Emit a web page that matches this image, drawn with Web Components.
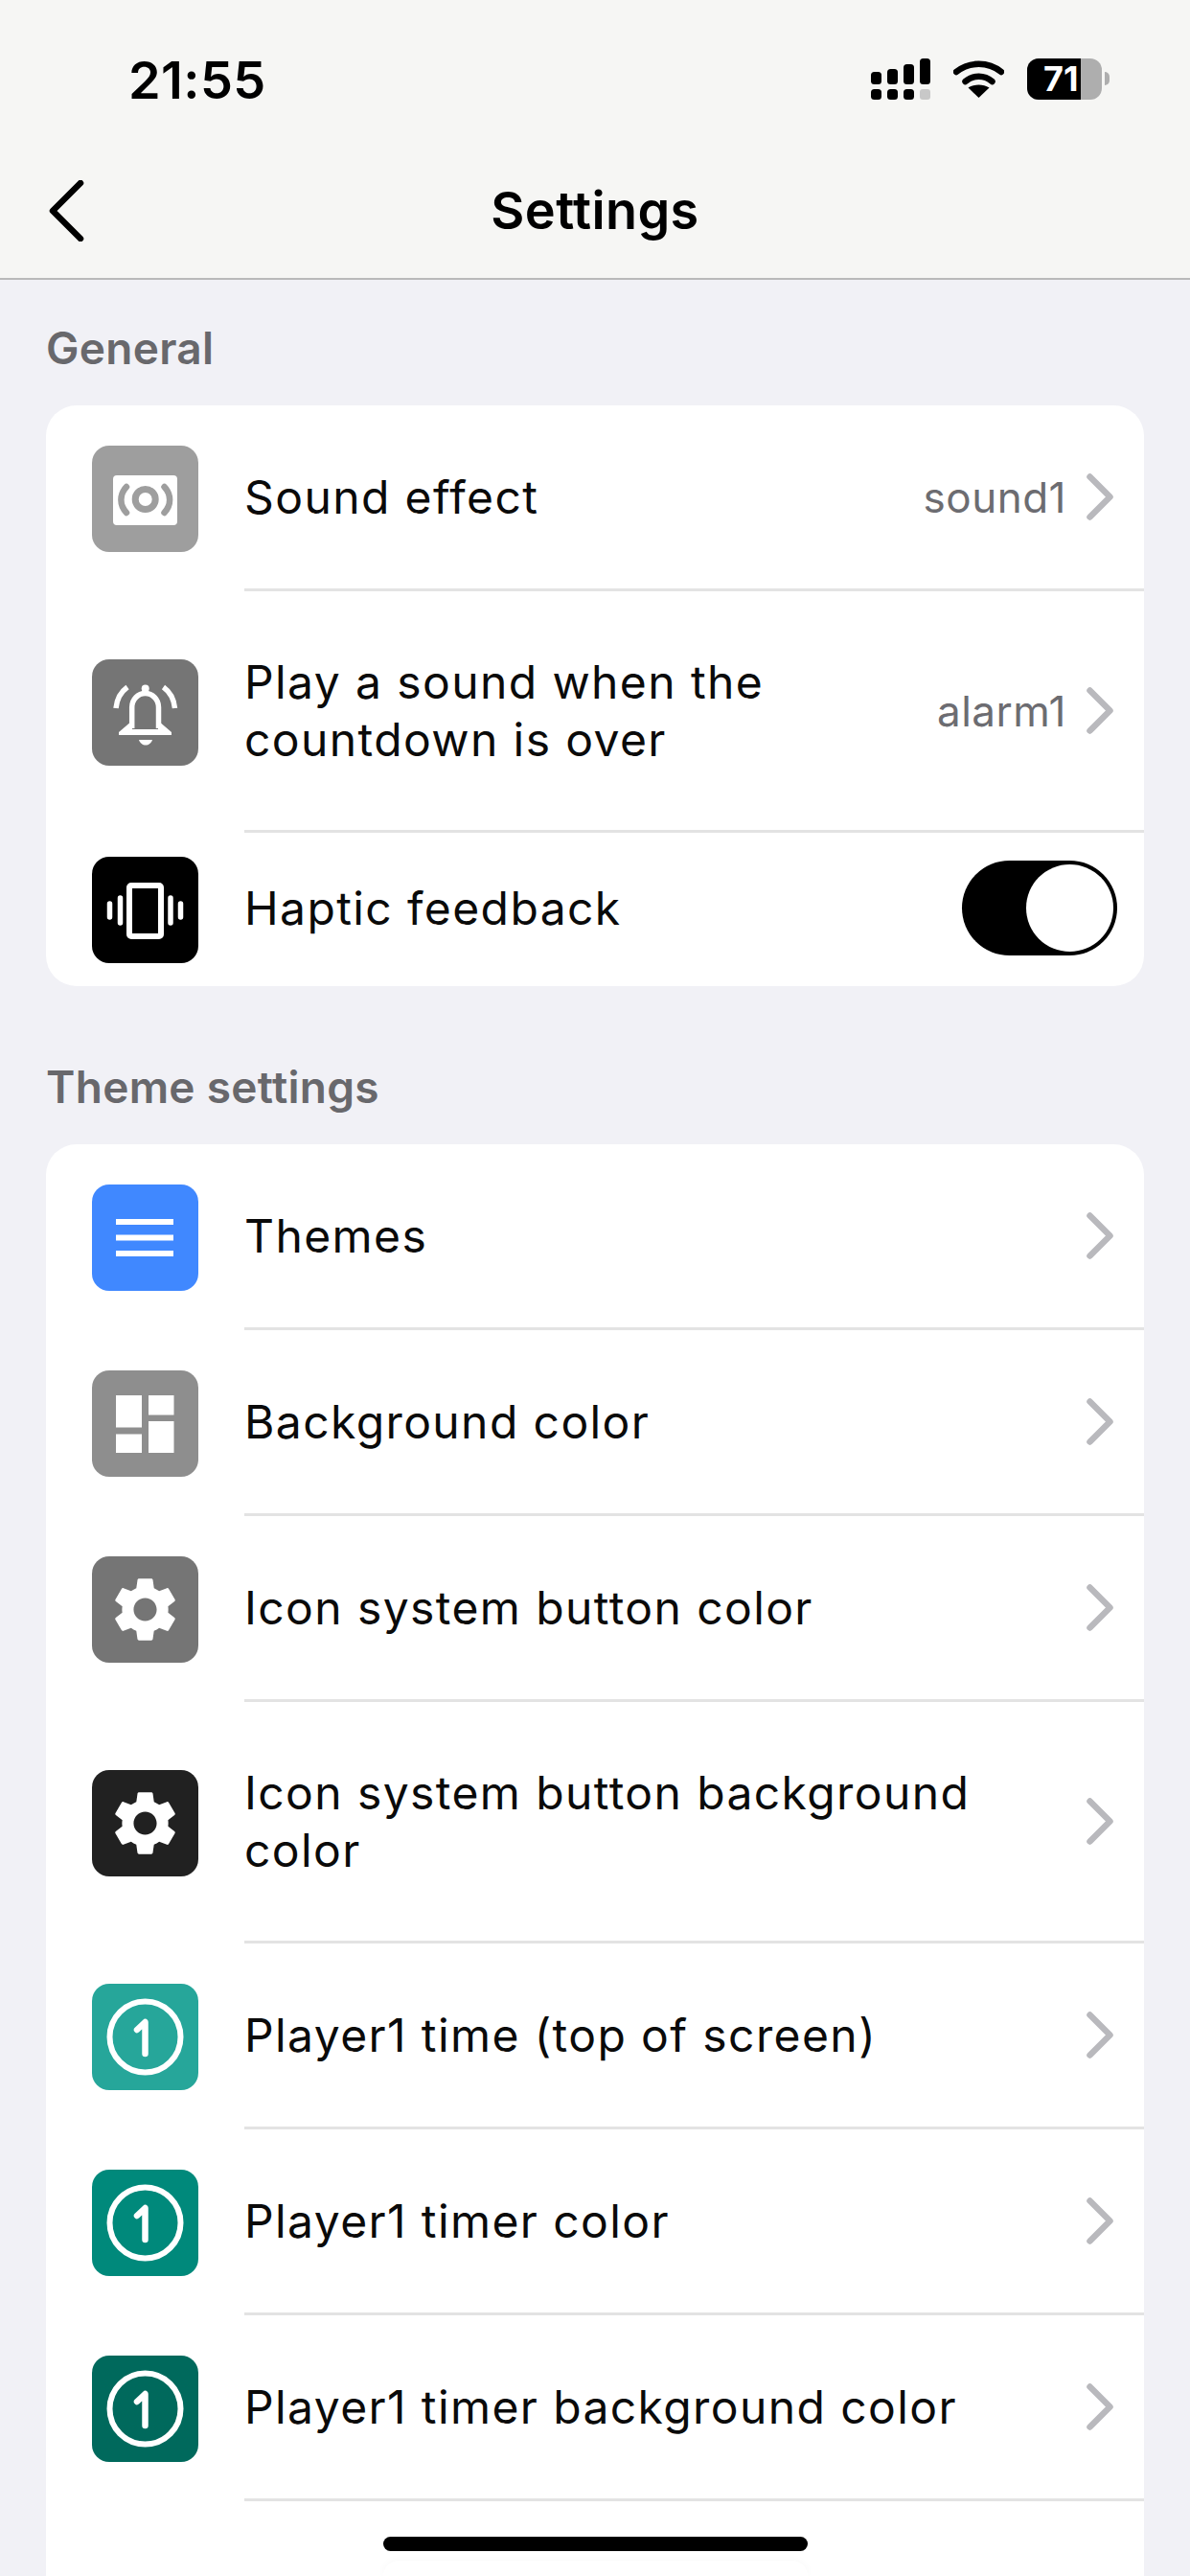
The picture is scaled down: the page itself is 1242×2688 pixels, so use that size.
<!DOCTYPE html>
<html lang="en">
<head>
<meta charset="utf-8">
<title>Settings</title>
<style>
  html, body { margin: 0; height: 100%; overflow: hidden; }
  body {
    display: flex;
    flex-direction: column;
    height: 2688px;
    background: #f1f1f6;
    font-family: Inter, "Liberation Sans", sans-serif;
    color: #000;
    position: relative;
  }
  settings-section:last-of-type { flex: 1; min-height: 0; }
</style>
</head>
<body>
  <app-header title="Settings" time="21:55" battery="71"></app-header>

  <settings-section heading="General">
    <settings-row value="sound1">
      <setting-icon slot="icon" name="sound" bg="#9e9e9e"></setting-icon>
      Sound effect
    </settings-row>
    <settings-row value="alarm1">
      <setting-icon slot="icon" name="bell" bg="#757575"></setting-icon>
      Play a sound when the<br>countdown is over
    </settings-row>
    <settings-row compact last>
      <setting-icon slot="icon" name="vibrate" bg="#000000"></setting-icon>
      Haptic feedback
      <toggle-switch slot="end"></toggle-switch>
    </settings-row>
  </settings-section>

  <settings-section heading="Theme settings" open-end>
    <settings-row>
      <setting-icon slot="icon" name="menu" bg="#4088ff"></setting-icon>
      Themes
    </settings-row>
    <settings-row>
      <setting-icon slot="icon" name="dashboard" bg="#8e8e8e"></setting-icon>
      Background color
    </settings-row>
    <settings-row>
      <setting-icon slot="icon" name="gear" bg="#757575"></setting-icon>
      Icon system button color
    </settings-row>
    <settings-row>
      <setting-icon slot="icon" name="gear" bg="#212121"></setting-icon>
      Icon system button background<br>color
    </settings-row>
    <settings-row>
      <setting-icon slot="icon" name="one" bg="#26a69a"></setting-icon>
      Player1 time (top of screen)
    </settings-row>
    <settings-row>
      <setting-icon slot="icon" name="one" bg="#00897b"></setting-icon>
      Player1 timer color
    </settings-row>
    <settings-row>
      <setting-icon slot="icon" name="one" bg="#00695c"></setting-icon>
      Player1 timer background color
    </settings-row>
  </settings-section>

  <home-indicator></home-indicator>

<script>
// Inline glyphs for the rounded tiles, drawn on a 111 x 111 canvas
const ICONS = {
  sound: `
    <rect x="22" y="31" width="67" height="52" rx="4" fill="#fff"/>
    <circle cx="55.700" cy="56" r="10.500" fill="none" stroke="#9e9e9e" stroke-width="7"/>
    <path d="M36 43C28.500 51 28.500 62 36 70M75.500 43C83 51 83 62 75.500 70" fill="none" stroke="#9e9e9e" stroke-width="6.500" stroke-linecap="round"/>`,
  bell: `
    <g fill="none" stroke="#fff" stroke-width="5.500">
      <path d="M25 51C26 41 30 34 37 29M86.500 51C85.500 41 81.500 34 74.500 29"/>
      <path d="M41.700 72V50C41.700 42 48 35.500 55.600 35.500S69.500 42 69.500 50V72"/>
    </g>
    <circle cx="55.700" cy="30.500" r="4" fill="#fff"/>
    <path d="M42 64L28 76V79H83V76L69 64V73H42z" fill="#fff"/>
    <path d="M49 84H63C62 87.500 59 89.500 56 89.500S50 87.500 49 84z" fill="#fff"/>`,
  vibrate: `
    <rect x="39" y="30" width="33" height="53" rx="2" fill="none" stroke="#fff" stroke-width="6"/>
    <g fill="none" stroke="#fff" stroke-width="5.500" stroke-linecap="round">
      <path d="M29.500 43v26M82 43v26M18.500 49v14M92.500 49v14"/>
    </g>`,
  menu: `
    <g fill="#fff">
      <rect x="25" y="36" width="60" height="6"/>
      <rect x="25" y="52.500" width="60" height="6"/>
      <rect x="25" y="69" width="60" height="6"/>
    </g>`,
  dashboard: `
    <g fill="#fff">
      <rect x="25" y="26" width="27" height="33.500"/>
      <rect x="25" y="66.500" width="27" height="19.500"/>
      <rect x="59" y="26" width="26.500" height="20.500"/>
      <rect x="59" y="53" width="26.500" height="33"/>
    </g>`,
  gear: `
    <g transform="translate(15.300 15.300) scale(3.350)">
      <path fill="#fff" d="M19.140 12.940c.04-.3.06-.61.06-.94 0-.32-.02-.64-.07-.94l2.030-1.580c.18-.14.23-.41.12-.61l-1.920-3.320c-.12-.22-.37-.29-.59-.22l-2.390.96c-.5-.38-1.030-.7-1.620-.94l-.36-2.540c-.04-.24-.24-.41-.48-.41h-3.840c-.24 0-.43.17-.47.41l-.36 2.540c-.59.24-1.130.57-1.620.94l-2.390-.96c-.22-.08-.47 0-.59.22L2.740 8.870c-.12.21-.08.47.12.61l2.030 1.580c-.05.3-.09.63-.09.94s.02.64.07.94l-2.030 1.580c-.18.14-.23.41-.12.61l1.920 3.320c.12.22.37.29.59.22l2.390-.96c.5.38 1.030.7 1.620.94l.36 2.540c.05.24.24.41.48.41h3.840c.24 0 .44-.17.47-.41l.36-2.540c.59-.24 1.130-.56 1.620-.94l2.390.96c.22.08.47 0 .59-.22l1.920-3.320c.12-.22.07-.47-.12-.61l-2.010-1.580zM12 15.600c-1.980 0-3.600-1.620-3.600-3.600s1.620-3.600 3.600-3.600 3.600 1.620 3.600 3.600-1.620 3.600-3.600 3.600z"/>
    </g>`,
  one: `
    <circle cx="55.500" cy="55.500" r="37" fill="none" stroke="#fff" stroke-width="6"/>
    <path d="M47 48l8.500-8v33" fill="none" stroke="#fff" stroke-width="6.500" stroke-linecap="round" stroke-linejoin="round"/>`
};

class SettingIcon extends HTMLElement {
  constructor() {
    super();
    this.attachShadow({ mode: 'open' });
  }

  connectedCallback() {
    const name = this.getAttribute('name');
    const bg = this.getAttribute('bg') || '#757575';
    this.shadowRoot.innerHTML = `
      <style>
        :host { display: block; width: 111px; height: 111px; flex: none; }
        .tile { width: 111px; height: 111px; border-radius: 18px; background: ${bg}; overflow: hidden; }
        svg { display: block; }
      </style>
      <div class="tile">
        <svg width="111" height="111" viewBox="0 0 111 111" aria-hidden="true">${ICONS[name] || ''}</svg>
      </div>
    `;
  }
}

class ToggleSwitch extends HTMLElement {
  constructor() {
    super();
    const shadow = this.attachShadow({ mode: 'open' });
    shadow.innerHTML = `
      <style>
        :host { display: block; flex: none; }
        .track {
          box-sizing: border-box;
          width: 162px;
          height: 99px;
          padding: 4px;
          border-radius: 50px;
          background: #000;
          display: flex;
          justify-content: flex-end;
        }
        .knob { width: 91px; height: 91px; border-radius: 50%; background: #fff; }
      </style>
      <div class="track"><div class="knob"></div></div>
    `;
  }
}

class SettingsRow extends HTMLElement {
  constructor() {
    super();
    const shadow = this.attachShadow({ mode: 'open' });
    shadow.innerHTML = `
      <style>
        :host {
          display: flex;
          align-items: center;
          gap: 48px;
          padding-left: 48px;
          font-size: 48px;
          line-height: 60px;
          letter-spacing: 1.4px;
          color: #0a0a0a;
        }
        .body {
          flex: 1;
          min-width: 0;
          box-sizing: border-box;
          min-height: 194px;
          padding: 64.500px 32px 64.500px 0;
          border-bottom: 3px solid #e3e3e3;
          display: flex;
          align-items: center;
        }
        :host([compact]) .body { min-height: 160px; padding: 0 28px 3px 0; }
        :host([last]) .body { border-bottom: none; }
        .label { flex: 1; min-width: 0; }
        .value { font-size: 44px; letter-spacing: 0.5px; color: #6c6c71; margin-right: 21px; }
        .chevron { display: block; flex: none; }
        .value:empty { display: none; }
      </style>
      <slot name="icon"></slot>
      <div class="body">
        <div class="label"><slot></slot></div>
        <span class="value"></span>
        <slot name="end">
          <svg class="chevron" width="28" height="49" viewBox="0 0 28 49" aria-hidden="true">
            <path d="M3.500 3.500L24.500 24.500L3.500 45.500" fill="none" stroke="#b9b9bd" stroke-width="6.500" stroke-linecap="round" stroke-linejoin="round"/>
          </svg>
        </slot>
      </div>
    `;
    this._value = shadow.querySelector('.value');
  }

  static get observedAttributes() {
    return ['value'];
  }

  attributeChangedCallback(name, oldValue, newValue) {
    if (name === 'value') this._value.textContent = newValue || '';
  }
}

class SettingsSection extends HTMLElement {
  constructor() {
    super();
    const shadow = this.attachShadow({ mode: 'open' });
    shadow.innerHTML = `
      <style>
        :host { display: flex; flex-direction: column; padding: 0 48px; margin-top: 75px; }
        :host(:first-of-type) { margin-top: 0; }
        h2 {
          margin: 0 0 30px;
          font-size: 46px;
          line-height: 60px;
          letter-spacing: 0.3px;
          font-weight: 600;
          color: #68686c;
        }
        .card { flex: 1; background: #fff; border-radius: 32px; overflow: hidden; }
        /* the list runs on past the bottom of the screen */
        :host([open-end]) .card { border-radius: 32px 32px 0 0; }
      </style>
      <h2></h2>
      <div class="card"><slot></slot></div>
    `;
    this._heading = shadow.querySelector('h2');
  }

  static get observedAttributes() {
    return ['heading'];
  }

  attributeChangedCallback(name, oldValue, newValue) {
    if (name === 'heading') this._heading.textContent = newValue || '';
  }
}

class AppHeader extends HTMLElement {
  constructor() {
    super();
    this.attachShadow({ mode: 'open' });
  }

  connectedCallback() {
    const title = this.getAttribute('title') || '';
    const time = this.getAttribute('time') || '';
    const battery = this.getAttribute('battery') || '';
    this.shadowRoot.innerHTML = `
      <style>
        :host {
          display: block;
          margin-bottom: 41px;
          background: #f6f6f4;
          border-bottom: 2px solid #b9b9b9;
        }
        .status {
          box-sizing: border-box;
          height: 150px;
          padding: 54px 84px 0 134px;
          display: flex;
          justify-content: space-between;
        }
        .time { font-size: 54px; line-height: 60px; font-weight: 600; letter-spacing: 0.4px; }
        .indicators { display: flex; align-items: center; gap: 24px; height: 56px; }
        .battery { display: flex; align-items: center; gap: 3px; }
        .cell {
          width: 78px;
          height: 43px;
          border-radius: 12px;
          overflow: hidden;
          background: #aeaeae;
          display: flex;
        }
        .charge {
          width: 56px;
          background: #000;
          color: #fff;
          font-size: 36px;
          line-height: 43px;
          font-weight: 700;
          padding-left: 17px;
          box-sizing: border-box;
          white-space: nowrap;
        }
        .nub { width: 5px; height: 14px; background: #aeaeae; border-radius: 0 7px 7px 0; }
        .nav {
          height: 140px;
          display: grid;
          grid-template-columns: 1fr auto 1fr;
          align-items: center;
          padding-left: 50px;
          padding-right: 50px;
        }
        .title { font-size: 54px; line-height: 60px; font-weight: 600; letter-spacing: 0.4px; text-align: center; }
        svg { display: block; }
      </style>
      <div class="status">
        <span class="time">${time}</span>
        <div class="indicators">
          <svg width="62" height="43" viewBox="0 0 62 43" aria-hidden="true">
            <g fill="#000">
              <rect x="0" y="14" width="11" height="13" rx="3.500"/>
              <rect x="17" y="11" width="11" height="16" rx="3.500"/>
              <rect x="34" y="6" width="11" height="21" rx="3.500"/>
              <rect x="51" y="0" width="11" height="27" rx="3.500"/>
              <rect x="0" y="32" width="11" height="11" rx="3.500"/>
              <rect x="17" y="32" width="11" height="11" rx="3.500"/>
              <rect x="34" y="32" width="11" height="11" rx="3.500"/>
            </g>
            <rect x="51" y="32" width="11" height="11" rx="3" fill="#c8c8c8"/>
          </svg>
          <svg width="53" height="39" viewBox="0 0 53 39" aria-hidden="true">
            <path d="M3 12C16.500 1 36.500 1 50 12" fill="none" stroke="#000" stroke-width="6.500" stroke-linecap="round"/>
            <path d="M12.500 22C20.500 15 32.500 15 40.500 22" fill="none" stroke="#000" stroke-width="6.500" stroke-linecap="round"/>
            <path d="M26.500 39L15.500 28.500C22 24.500 31 24.500 37.500 28.500z" fill="#000"/>
          </svg>
          <div class="battery">
            <div class="cell"><div class="charge">${battery}</div></div>
            <div class="nub"></div>
          </div>
        </div>
      </div>
      <div class="nav">
        <svg width="38" height="64" viewBox="0 0 38 64" aria-hidden="true">
          <path d="M34 3L5 32L34 61" fill="none" stroke="#000" stroke-width="6.500" stroke-linecap="round" stroke-linejoin="round"/>
        </svg>
        <span class="title">${title}</span>
        <span></span>
      </div>
    `;
  }
}

// Sits over the page: the system home bar and the faint sheet edge under it
class HomeIndicator extends HTMLElement {
  constructor() {
    super();
    const shadow = this.attachShadow({ mode: 'open' });
    shadow.innerHTML = `
      <style>
        :host { position: absolute; left: 400px; bottom: 0; width: 443px; height: 41px; display: block; }
        .bar { height: 15px; border-radius: 8px; background: #000; }
        .sheet {
          margin-top: 10px;
          height: 16px;
          border-radius: 36px 36px 0 0;
          background: #fff;
          box-shadow: 0 -1px 8px rgba(0, 0, 0, 0.03);
        }
      </style>
      <div class="bar"></div>
      <div class="sheet"></div>
    `;
  }
}

customElements.define('setting-icon', SettingIcon);
customElements.define('toggle-switch', ToggleSwitch);
customElements.define('settings-row', SettingsRow);
customElements.define('settings-section', SettingsSection);
customElements.define('app-header', AppHeader);
customElements.define('home-indicator', HomeIndicator);
</script>
</body>
</html>
